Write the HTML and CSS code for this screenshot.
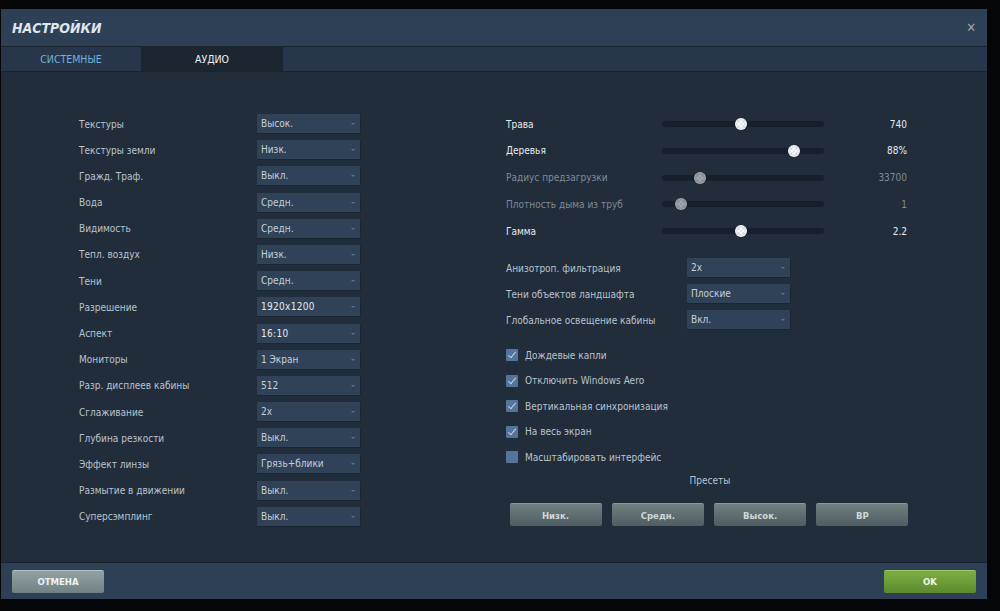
FILE: index.html
```html
<!DOCTYPE html>
<html lang="ru">
<head>
<meta charset="utf-8">
<title>Настройки</title>
<link rel="stylesheet" href="styles.css">
</head>
<body>
<div class="dialog">
  <div class="header">
    <div class="title">НАСТРОЙКИ</div>
    <div class="close">✕</div>
  </div>
  <div class="tabs">
    <div class="tab active">СИСТЕМНЫЕ</div>
    <div class="tab">АУДИО</div>
  </div>
  <div class="content">
    <div class="col-left">
      <div class="row"><span class="label">Текстуры</span><div class="select">Высок.</div></div>
      <div class="row"><span class="label">Текстуры земли</span><div class="select">Низк.</div></div>
      <div class="row"><span class="label">Гражд. Траф.</span><div class="select">Выкл.</div></div>
      <div class="row"><span class="label">Вода</span><div class="select">Средн.</div></div>
      <div class="row"><span class="label">Видимость</span><div class="select">Средн.</div></div>
      <div class="row"><span class="label">Тепл. воздух</span><div class="select">Низк.</div></div>
      <div class="row"><span class="label">Тени</span><div class="select">Средн.</div></div>
      <div class="row"><span class="label">Разрешение</span><div class="select bold">1920x1200</div></div>
      <div class="row"><span class="label">Аспект</span><div class="select bold">16:10</div></div>
      <div class="row"><span class="label">Мониторы</span><div class="select">1 Экран</div></div>
      <div class="row"><span class="label">Разр. дисплеев кабины</span><div class="select">512</div></div>
      <div class="row"><span class="label">Сглаживание</span><div class="select">2x</div></div>
      <div class="row"><span class="label">Глубина резкости</span><div class="select">Выкл.</div></div>
      <div class="row"><span class="label">Эффект линзы</span><div class="select">Грязь+блики</div></div>
      <div class="row"><span class="label">Размытие в движении</span><div class="select">Выкл.</div></div>
      <div class="row"><span class="label">Суперсэмплинг</span><div class="select">Выкл.</div></div>
    </div>
    <div class="col-right">
      <div class="sliders">
        <div class="srow bright"><span class="slabel">Трава</span><div class="track"><span class="knob" style="left:49%"></span></div><span class="sval">740</span></div>
        <div class="srow bright"><span class="slabel">Деревья</span><div class="track"><span class="knob" style="left:81.5%"></span></div><span class="sval">88%</span></div>
        <div class="srow dim"><span class="slabel">Радиус предзагрузки</span><div class="track"><span class="knob" style="left:23.5%"></span></div><span class="sval">33700</span></div>
        <div class="srow dim"><span class="slabel">Плотность дыма из труб</span><div class="track"><span class="knob" style="left:12%"></span></div><span class="sval">1</span></div>
        <div class="srow bright"><span class="slabel">Гамма</span><div class="track"><span class="knob" style="left:48.6%"></span></div><span class="sval">2.2</span></div>
      </div>
      <div class="selects">
        <div class="row"><span class="label wide">Анизотроп. фильтрация</span><div class="select">2x</div></div>
        <div class="row"><span class="label wide">Тени объектов ландшафта</span><div class="select">Плоские</div></div>
        <div class="row"><span class="label wide">Глобальное освещение кабины</span><div class="select">Вкл.</div></div>
      </div>
      <div class="checks">
        <div class="check"><span class="box on"></span>Дождевые капли</div>
        <div class="check"><span class="box on"></span>Отключить Windows Aero</div>
        <div class="check"><span class="box on"></span>Вертикальная синхронизация</div>
        <div class="check"><span class="box on"></span>На весь экран</div>
        <div class="check"><span class="box"></span>Масштабировать интерфейс</div>
      </div>
      <div class="presets">
        <div class="presets-title">Пресеты</div>
        <div class="preset-row">
          <div class="btn gray">Низк.</div>
          <div class="btn gray">Средн.</div>
          <div class="btn gray">Высок.</div>
          <div class="btn gray">ВР</div>
        </div>
      </div>
    </div>
  </div>
  <div class="footer">
    <div class="btn cancel">ОТМЕНА</div>
    <div class="btn ok">OK</div>
  </div>
</div>
</body>
</html>
```

FILE: styles.css
```css
html, body {
  margin: 0;
  padding: 0;
  background: #050607;
  font-family: "DejaVu Sans Condensed", "DejaVu Sans", "Liberation Sans", sans-serif;
  font-stretch: semi-condensed;
}
.dialog {
  margin: 9px 0 0 1px;
  width: 986px;
  height: 590px;
  display: flex;
  flex-direction: column;
  background: #212d3b;
}
.header {
  height: 38px;
  flex: none;
  background: #2e4055;
  display: flex;
  align-items: center;
  justify-content: space-between;
  padding: 0 11px;
  box-sizing: border-box;
  border-bottom: 1px solid #1a2430;
}
.title {
  color: #dfe5ec;
  font-weight: bold;
  font-style: italic;
  font-size: 14px;
}
.close {
  color: #9aa4ae;
  font-size: 13px;
}
.tabs {
  height: 25px;
  flex: none;
  background: #27364a;
  display: flex;
  border-bottom: 1px solid #1a2430;
  box-sizing: border-box;
}
.tab {
  width: 140px;
  display: flex;
  align-items: center;
  justify-content: center;
  font-size: 10.5px;
  color: #f0f2f4;
}
.tab.active {
  color: #6db3dc;
}
.tab + .tab {
  width: 142px;
  background: #1c2631;
}
.content {
  flex: 1;
  display: flex;
  padding: 42px 0 0 78px;
  box-sizing: border-box;
}
.col-left {
  display: flex;
  flex-direction: column;
  gap: 6.2px;
  width: 282px;
}
.row {
  display: flex;
  align-items: center;
  height: 20px;
}
.label {
  width: 178px;
  font-size: 10px;
  color: #b9c3cd;
}
.label.wide {
  width: 181px;
}
.select {
  width: 104px;
  height: 20px;
  box-sizing: border-box;
  background: #2f4258;
  border-bottom: 1px solid #1b2632;
  border-right: 1px solid #1b2632;
  color: #c6ced6;
  font-size: 10px;
  padding-left: 4px;
  display: flex;
  align-items: center;
  position: relative;
}
.select.bold {
  color: #e4e9ee;
  letter-spacing: 0.3px;
}
.select::after {
  content: "";
  position: absolute;
  right: 5px;
  top: 9px;
  border-left: 2px solid transparent;
  border-right: 2px solid transparent;
  border-top: 2px solid #5f7186;
}
.col-right {
  margin-left: 145px;
  display: flex;
  flex-direction: column;
  width: 402px;
}
.sliders {
  display: flex;
  flex-direction: column;
  gap: 6.8px;
}
.srow {
  display: flex;
  align-items: center;
  height: 20px;
  font-size: 10px;
}
.slabel {
  width: 156px;
}
.srow.bright { color: #e6eaee; }
.srow.dim { color: #7e8b98; }
.track {
  width: 162px;
  height: 6px;
  border-radius: 3px;
  background: #16202a;
  position: relative;
}
.knob {
  position: absolute;
  top: 50%;
  width: 12px;
  height: 12px;
  margin: -6px 0 0 -6px;
  border-radius: 50%;
  background:
    linear-gradient(45deg, transparent 45%, rgba(170,180,190,0.3) 48% 52%, transparent 55%),
    linear-gradient(-45deg, transparent 45%, rgba(170,180,190,0.3) 48% 52%, transparent 55%),
    radial-gradient(circle at 50% 50%, #ffffff 0 30%, #e6eaee 31% 60%, #f6f8fa 61%);
}
.srow.dim .knob {
  background:
    linear-gradient(45deg, transparent 45%, rgba(110,116,124,0.3) 48% 52%, transparent 55%),
    linear-gradient(-45deg, transparent 45%, rgba(110,116,124,0.3) 48% 52%, transparent 55%),
    radial-gradient(circle at 50% 50%, #a6abb0 0 30%, #92989e 31% 60%, #9da3a9 61%);
}
.sval {
  width: 83px;
  text-align: right;
}
.selects {
  margin-top: 17px;
  display: flex;
  flex-direction: column;
  gap: 6px;
}
.checks {
  margin-top: 17px;
  display: flex;
  flex-direction: column;
  gap: 9.5px;
}
.check {
  display: flex;
  align-items: center;
  height: 16px;
  font-size: 10px;
  color: #b9c3cd;
}
.box {
  width: 12px;
  height: 12px;
  background: #53759c;
  margin-right: 7px;
  position: relative;
  border-radius: 1px;
}
.box.on::after {
  content: "";
  position: absolute;
  left: 4px;
  top: 1px;
  width: 3px;
  height: 7px;
  border-right: 1.5px solid #c4d5e6;
  border-bottom: 1.5px solid #c4d5e6;
  transform: rotate(40deg);
}
.presets {
  margin-top: 10px;
  display: flex;
  flex-direction: column;
  align-items: center;
  width: 406px;
  margin-left: -2px;
}
.presets-title {
  font-size: 10px;
  color: #b9c3cd;
  height: 14px;
  padding-left: 6px;
}
.preset-row {
  margin-top: 14px;
  display: flex;
  gap: 10.3px;
  padding-left: 4px;
}
.btn {
  width: 92px;
  height: 23px;
  display: flex;
  align-items: center;
  justify-content: center;
  font-size: 9.5px;
  font-weight: bold;
  border-radius: 2px;
  box-sizing: border-box;
}
.btn.gray {
  background: linear-gradient(#6f8081, #4e5e60);
  color: #d0d7d7;
  border-top: 1px solid #8c9a9b;
}
.footer {
  height: 37px;
  flex: none;
  background: #2e4055;
  border-top: 1px solid #1a2430;
  box-sizing: border-box;
  display: flex;
  align-items: center;
  justify-content: space-between;
  padding: 0 11px;
}
.btn.cancel {
  background: linear-gradient(#92a3a4, #6f8182);
  color: #eef2f2;
  border-top: 1px solid #b4c2c2;
}
.btn.ok {
  background: linear-gradient(#7dae43, #5b8a2f);
  color: #eef6e6;
  border-top: 1px solid #9bc764;
}
```
